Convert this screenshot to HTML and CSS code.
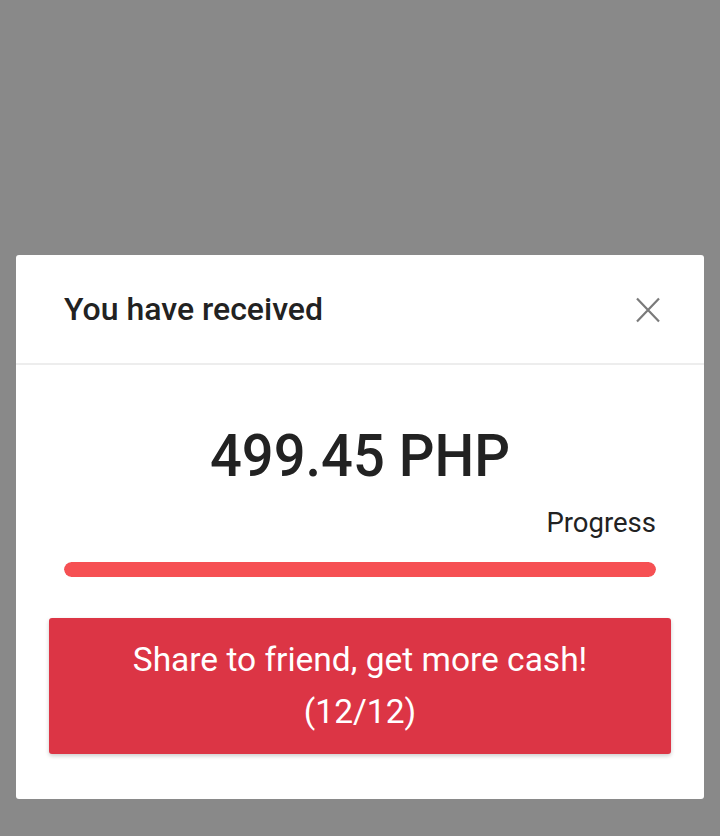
FILE: index.html
```html
<!DOCTYPE html>
<html>
<head>
  <meta charset="UTF-8">
  <title>You have received</title>
  <link rel="stylesheet" href="styles.css">
</head>
<body>
  <div class="modal">
    <div class="modal-header">
      <h4 class="modal-title">You have received</h4>
      <button class="close" aria-label="Close">
        <svg width="26" height="26" viewBox="0 0 26 26">
          <path d="M2 1.5 L24 24.5 M24 1.5 L2 24.5" stroke="#7a7a7a" stroke-width="2.2" fill="none"/>
        </svg>
      </button>
    </div>

    <div class="modal-body">
      <div class="amount">499.45 PHP</div>
      <div class="progress-label">Progress</div>
      <div class="progress">
        <div class="progress-bar" style="width: 100%"></div>
      </div>
      <button class="share-btn">Share to friend, get more cash!<br>(12/12)</button>
    </div>
  </div>
</body>
</html>
```

FILE: styles.css
```css
html, body {
  margin: 0;
  height: 100%;
}
body {
  background-color: #898989;
  font-family: Roboto, "Liberation Sans", sans-serif;
  padding-top: 255px;
  box-sizing: border-box;
}
.modal {
  margin: 0 16px;
  background-color: #fff;
  border-radius: 3px;
}
.modal-header {
  height: 108px;
  display: flex;
  align-items: center;
  justify-content: space-between;
  padding: 0 43px 0 48px;
  border-bottom: 2px solid #ededed;
}
.modal-title {
  margin: 0;
  font-size: 32px;
  font-weight: 500;
  color: #222;
}
.close {
  border: none;
  background: none;
  padding: 0;
  width: 26px;
  height: 26px;
  margin-top: 2px;
}
.modal-body {
  padding: 54px 33px 45px;
}
.amount {
  text-align: center;
  font-size: 59px;
  font-weight: 500;
  line-height: 74px;
  color: #222;
  transform: scaleX(0.95);
}
.progress-label {
  margin-top: 14px;
  text-align: right;
  padding-right: 15px;
  font-size: 27.5px;
  line-height: 32px;
  color: #222;
}
.progress {
  margin: 23px 15px 0;
  height: 15px;
  border-radius: 8px;
  background-color: #eee;
  overflow: hidden;
}
.progress-bar {
  height: 100%;
  background-color: #f65053;
  border-radius: 8px;
}
.share-btn {
  display: block;
  width: 100%;
  margin-top: 41px;
  padding: 16px 10px;
  border: none;
  border-radius: 3px;
  background-color: #dc3545;
  color: #fff;
  font-family: inherit;
  font-size: 33.5px;
  line-height: 52px;
  box-shadow: 0 2px 4px rgba(0,0,0,0.2);
}
```
